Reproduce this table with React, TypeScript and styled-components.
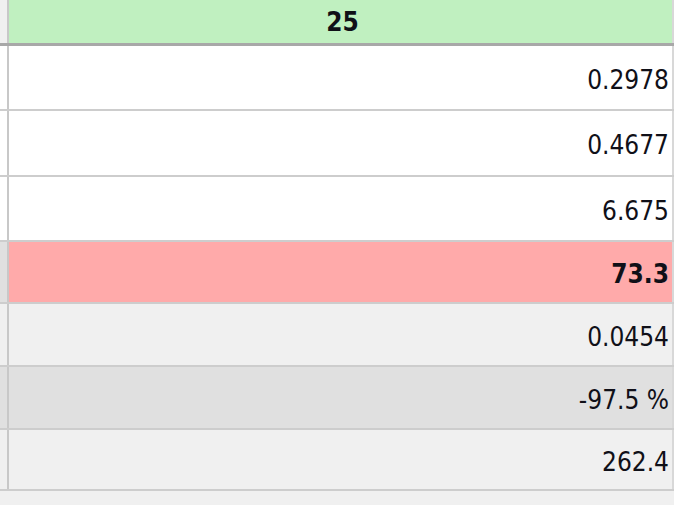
import { FC } from "react";
import styled, { createGlobalStyle } from "styled-components";

type RowData = {
  value: string;
  height: number;
  bg: string;
  side: string;
  bold?: boolean;
};

const rows: RowData[] = [
  { value: "0.2978", height: 63, bg: "#ffffff", side: "#ffffff" },
  { value: "0.4677", height: 64, bg: "#ffffff", side: "#ffffff" },
  { value: "6.675", height: 63, bg: "#ffffff", side: "#ffffff" },
  { value: "73.3", height: 60, bg: "#ffaaaa", side: "#e0e0e0", bold: true },
  { value: "0.0454", height: 61, bg: "#f0f0f0", side: "#f0f0f0" },
  { value: "-97.5 %", height: 61, bg: "#e0e0e0", side: "#e0e0e0" },
  { value: "262.4", height: 59, bg: "#f0f0f0", side: "#f0f0f0" },
];

const GlobalStyle = createGlobalStyle`
  html, body {
    margin: 0;
    padding: 0;
    background: #f0f0f0;
    font-family: "DejaVu Sans Condensed", "DejaVu Sans", sans-serif;
    font-stretch: condensed;
  }
`;

export default function App() {
  return (
    <>
      <GlobalStyle />
      <Table>
        <HeaderRow>
          <SideCell $bg="#f0f0f0" />
          <HeaderCell>25</HeaderCell>
        </HeaderRow>
        {rows.map((r) => (
          <DataRow key={r.value} row={r} />
        ))}
      </Table>
    </>
  );
}

const DataRow: FC<{ row: RowData }> = ({ row }) => (
  <Row style={{ height: row.height }}>
    <SideCell $bg={row.side} />
    <ValueCell $bg={row.bg} $bold={row.bold}>
      {row.value}
    </ValueCell>
  </Row>
);

const Table = styled.div`
  display: flex;
  flex-direction: column;
  width: 674px;
`;

const HeaderRow = styled.div`
  display: flex;
  height: 43px;
  border-bottom: 3px solid #a8a8a8;
`;

const Row = styled.div`
  display: flex;
  border-bottom: 2px solid #cdcdcd;
`;

const SideCell = styled.div<{ $bg: string }>`
  width: 7px;
  flex: none;
  background: ${({ $bg }) => $bg};
  border-right: 2px solid #c8c8c8;
`;

const HeaderCell = styled.div`
  flex: 1;
  display: flex;
  align-items: center;
  justify-content: center;
  padding-left: 4px;
  background: #c0f0c0;
  border-right: 2px solid #d8d8d8;
  font-size: 26px;
  font-weight: bold;
  color: #101018;
`;

const ValueCell = styled.div<{ $bg: string; $bold?: boolean }>`
  flex: 1;
  display: flex;
  align-items: center;
  justify-content: flex-end;
  padding: 4px 3px 0 0;
  background: ${({ $bg }) => $bg};
  border-right: 2px solid #d8d8d8;
  font-size: 26px;
  font-weight: ${({ $bold }) => ($bold ? "bold" : "normal")};
  color: #101018;
`;
